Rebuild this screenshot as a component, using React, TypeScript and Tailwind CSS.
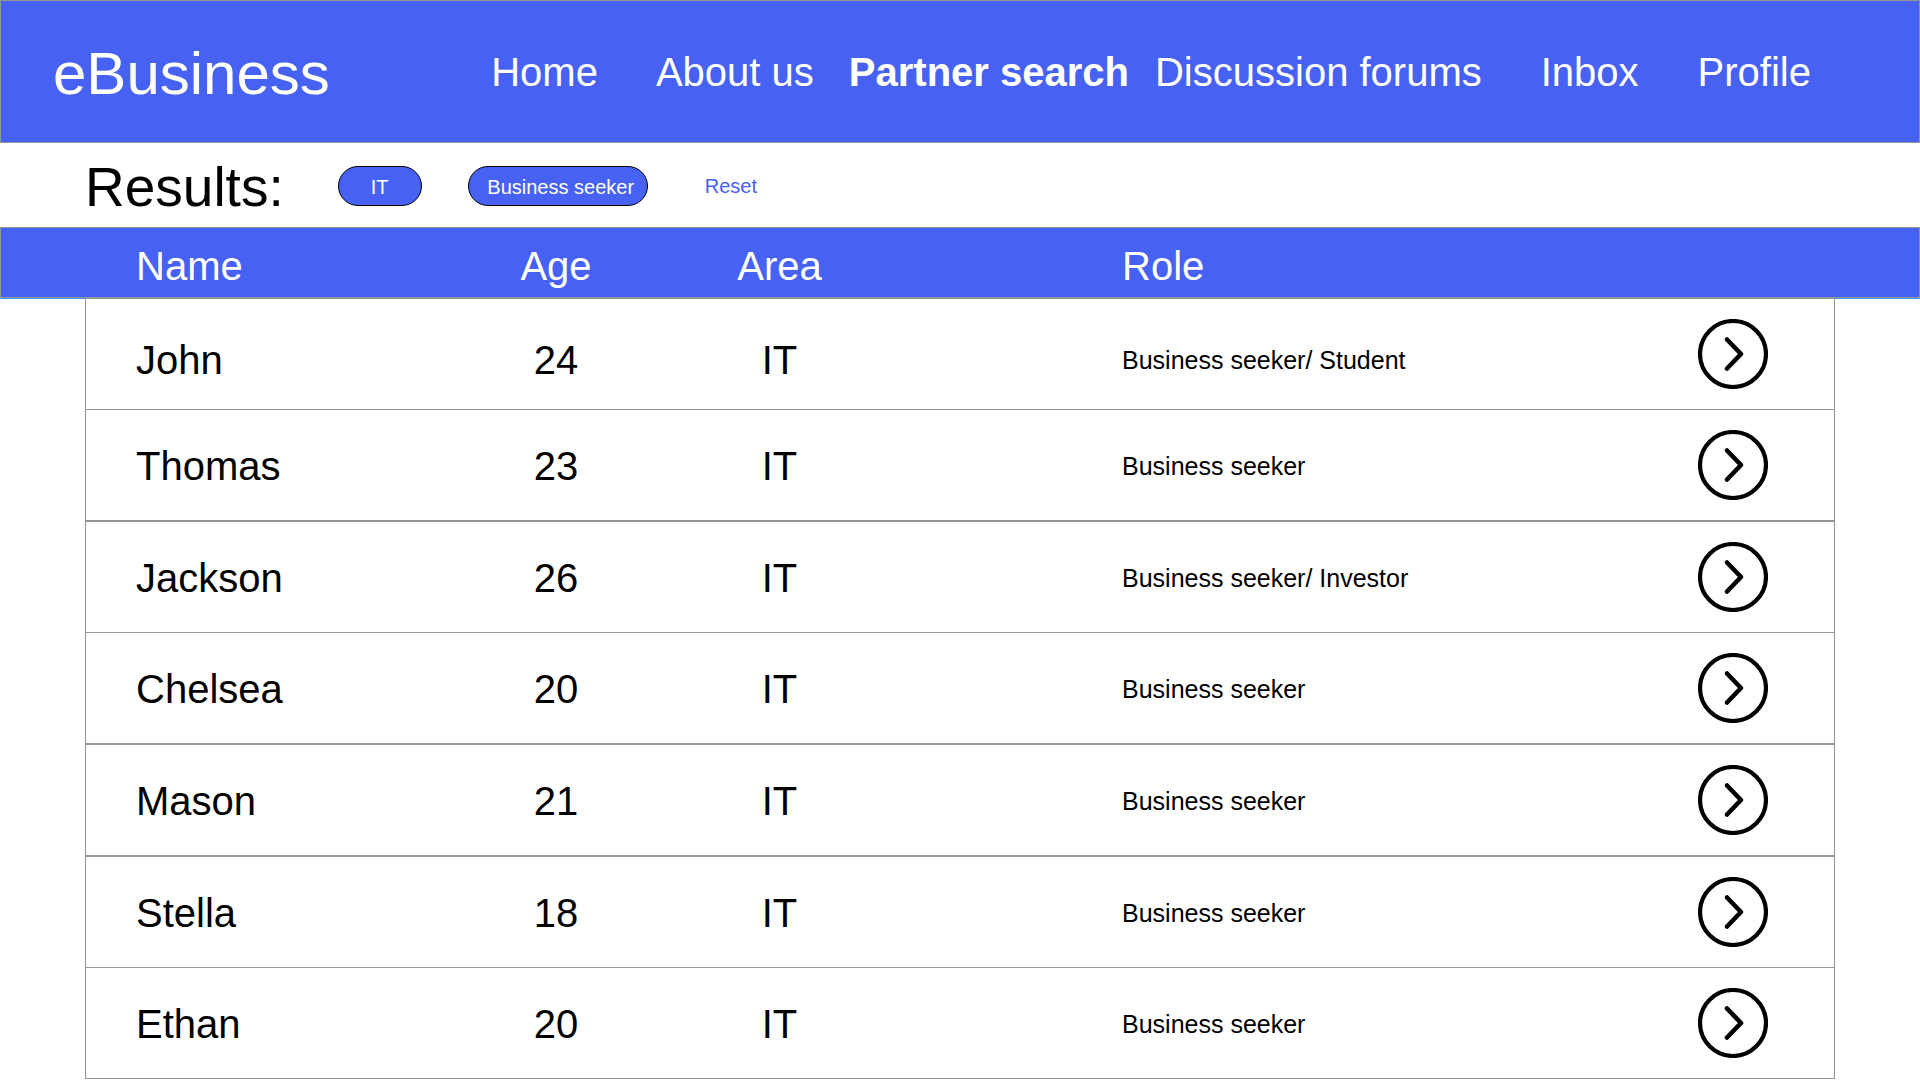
const navItems = [
  { label: "Home", className: "" },
  { label: "About us", className: "ml-[58px]" },
  { label: "Partner search", className: "ml-[35px] font-bold", current: true },
  { label: "Discussion forums", className: "ml-[26px]" },
  { label: "Inbox", className: "ml-[59px]" },
  { label: "Profile", className: "ml-[59px]" },
];

const people = [
  { name: "John", age: 24, role: "Business seeker/ Student", row: "h-[111px] border-b", text: "pt-3" },
  { name: "Thomas", age: 23, role: "Business seeker", row: "h-[112px] border-b-2", text: "pt-0.5" },
  { name: "Jackson", age: 26, role: "Business seeker/ Investor", row: "h-[111px] border-b", text: "pt-0.5" },
  { name: "Chelsea", age: 20, role: "Business seeker", row: "h-[112px] border-b-2", text: "pt-0.5" },
  { name: "Mason", age: 21, role: "Business seeker", row: "h-[112px] border-b-2", text: "pt-0.5" },
  { name: "Stella", age: 18, role: "Business seeker", row: "h-[111px] border-b", text: "pt-0.5" },
  { name: "Ethan", age: 20, role: "Business seeker", row: "h-[111px] border-b", text: "pt-0.5" },
];

function ArrowIcon() {
  return (
    <svg viewBox="0 0 70 70" className="size-[70px]" fill="none" stroke="black" aria-hidden="true">
      <circle cx="35" cy="35" r="33" strokeWidth="4.2" />
      <path d="M29 20.5 43 35 29 49.5" strokeWidth="4.6" strokeLinecap="round" strokeLinejoin="round" />
    </svg>
  );
}

export default function App() {
  return (
    <div className="bg-white font-['Liberation_Sans',Arial,sans-serif] text-black">
      <header className="flex h-[143px] items-center justify-between border border-[#919699] bg-[#4762f3] pr-[108px] pl-[52px] whitespace-nowrap text-white">
        <a href="#" className="pt-1 text-[60px] leading-none">eBusiness</a>
        <nav className="flex items-center text-[40px] leading-none">
          {navItems.map((item) => (
            <a key={item.label} href="#" className={item.className} aria-current={item.current ? "page" : undefined}>
              {item.label}
            </a>
          ))}
        </nav>
      </header>

      <main>
        <section className="flex h-[84px] items-center pt-0.5 pl-[85px] text-xl">
          <h1 className="mr-[54px] pt-0.5 text-[55px] leading-none">Results:</h1>
          <button className="h-10 w-[84px] rounded-full border border-black bg-[#4762f3] pt-0.5 text-white">IT</button>
          <button className="ml-[46px] h-10 w-[180px] rounded-full border border-black bg-[#4762f3] pt-0.5 pl-1.5 text-white">
            Business seeker
          </button>
          <button className="ml-[57px] text-[#4762f3]">Reset</button>
        </section>

        <table role="table" className="block text-[40px] leading-none">
          <thead role="rowgroup" className="block border-b border-[#3d9be0]">
            <tr
              role="row"
              className="grid h-[71px] grid-cols-[360fr_220fr_227fr_739fr_202fr] items-center border border-[#919699] bg-[#4762f3] px-[85px] pt-1.5 text-white"
            >
              <th role="columnheader" className="pl-[50px] text-left font-normal">Name</th>
              <th role="columnheader" className="text-center font-normal">Age</th>
              <th role="columnheader" className="text-center font-normal">Area</th>
              <th role="columnheader" className="pl-[229px] text-left font-normal">Role</th>
              <td role="cell" />
            </tr>
          </thead>
          <tbody role="rowgroup" className="relative mx-[85px] -mt-px block border-x border-t border-[#919699]">
            {people.map((person) => (
              <tr
                key={person.name}
                role="row"
                className={`grid grid-cols-[360fr_220fr_227fr_739fr_202fr] items-center border-[#919699] ${person.row}`}
              >
                <td role="cell" className={`pl-[50px] ${person.text}`}>{person.name}</td>
                <td role="cell" className={`text-center ${person.text}`}>{person.age}</td>
                <td role="cell" className={`text-center ${person.text}`}>IT</td>
                <td role="cell" className={`pl-[229px] text-[25px] ${person.text}`}>{person.role}</td>
                <td role="cell" className="flex justify-center">
                  <button aria-label={`View ${person.name}`}>
                    <ArrowIcon />
                  </button>
                </td>
              </tr>
            ))}
          </tbody>
        </table>
      </main>
    </div>
  );
}
